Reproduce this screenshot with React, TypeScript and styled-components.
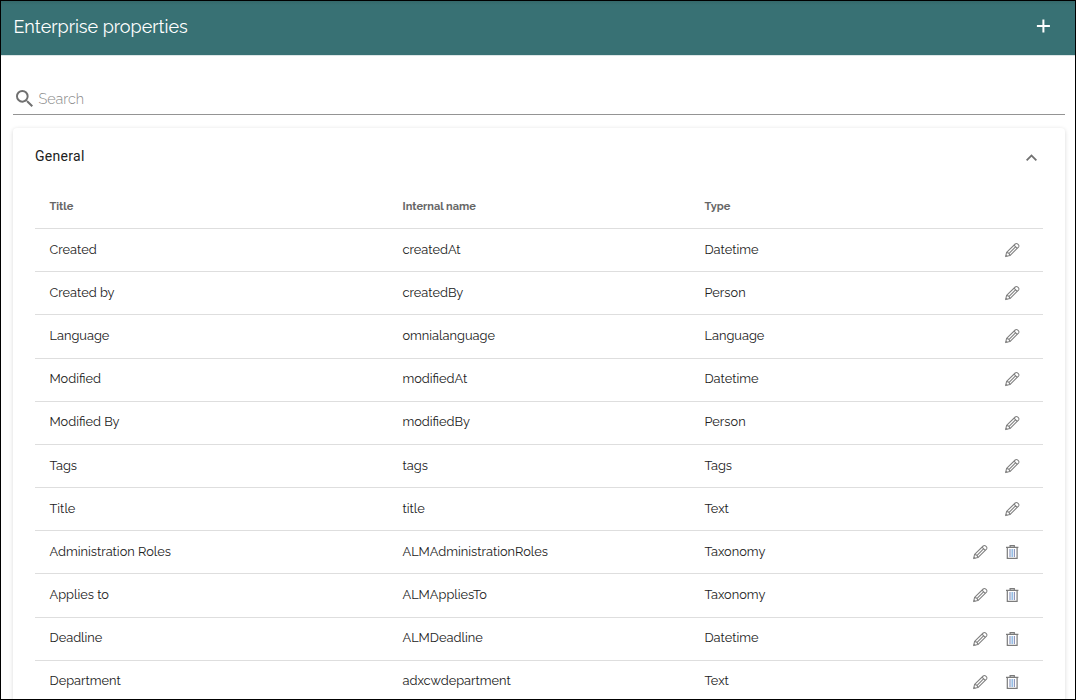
import React from "react";
import styled, { createGlobalStyle } from "styled-components";

const GlobalStyle = createGlobalStyle`
  * { box-sizing: border-box; }
  body { margin: 0; background: #fff; }
`;

const Frame = styled.div`
  height: 700px;
  border: 1px solid #000;
  overflow: hidden;
  background: #fff;
  color: #212121;
  font-family: Raleway, Lato, sans-serif;
  font-size: 12.8px;
`;

const Header = styled.header`
  display: flex;
  align-items: center;
  justify-content: space-between;
  height: 54px;
  padding: 0 25px 3px 12.5px;
  color: #fff;
  background: linear-gradient(#34686a, #387174 4px);
  box-shadow: 0 1px 0 #dce6e7;
`;

const Heading = styled.h1`
  margin: 0;
  font-size: 18px;
  font-weight: 400;
  line-height: 24px;
`;

const SearchBar = styled.div`
  display: flex;
  align-items: center;
  height: 33px;
  margin: 27px 10px 0 12px;
  padding: 1px 0 0 3px;
  gap: 5.5px;
  border-bottom: 1px solid #949494;
`;

const SearchText = styled.span`
  color: #8a8a8a;
  font-size: 14.4px;
  font-weight: 300;
`;

const Card = styled.section`
  height: 640px;
  margin: 13px 10px 0 12px;
  padding: 0 22px;
  border-radius: 4px;
  box-shadow: 0 1px 4px rgba(0, 0, 0, 0.16);
`;

const CardHeader = styled.div`
  display: flex;
  align-items: center;
  justify-content: space-between;
  height: 57px;
  padding-right: 6px;
`;

const CardTitle = styled.h2`
  margin: 0;
  padding-bottom: 2px;
  color: #212121;
  font: 400 14px/20px Roboto, sans-serif;
  letter-spacing: 0.3px;
`;

const Row = styled.div`
  display: grid;
  grid-template-columns: 353px 302px 1fr auto;
  align-items: center;
  height: 43.18px;
  padding: 0 23px 0 14.5px;
  border-bottom: 1px solid #dedede;
`;

const HeadRow = styled(Row)`
  height: 44px;
  color: #666;
  font-size: 11px;
  font-weight: 700;
`;

const HeadCell = styled.span`
  white-space: nowrap;
`;

const Cell = styled(HeadCell)`
  padding-bottom: 1.83px;
`;

const Actions = styled.div`
  display: flex;
  gap: 16px;
  padding-bottom: 0.25px;
`;

const Icon = styled.svg`
  display: block;
  flex: none;
`;

const PlusIcon = () => (
  <Icon width="14" height="16" viewBox="0 0 14 16" stroke="#fff" strokeWidth="2">
    <path d="M7.4 .5v13M.9 7h13" />
  </Icon>
);

const SearchIcon = () => (
  <Icon width="17" height="17" viewBox="3 3 17.49 17.49" fill="#707070">
    <path d="M15.5 14h-.79l-.28-.27A6.471 6.471 0 0 0 16 9.5 6.5 6.5 0 1 0 9.5 16c1.61 0 3.09-.59 4.23-1.57l.27.28v.79l5 4.99L20.49 19l-4.99-5zm-6 0C7.01 14 5 11.99 5 9.5S7.01 5 9.5 5 14 7.01 14 9.5 11.99 14 9.5 14z" />
  </Icon>
);

const ChevronIcon = () => (
  <Icon width="11" height="9" viewBox="6 5.6 12 9.82" fill="#707070">
    <path d="M12 8l-6 6 1.41 1.41L12 10.83l4.59 4.58L18 14z" />
  </Icon>
);

const PencilIcon = () => (
  <Icon width="16" height="16" viewBox="-0.4 0 16 16" fill="none" stroke="#808080" strokeWidth="1.05" strokeLinejoin="round">
    <path d="M1.2 14.6l1-4.2 8.6-8.4c1.7-1.6 4.9 1.4 3.3 3.1l-8.6 8.5-4.3 1z" />
    <path d="M2.2 10.4c1.8.1 3.2 1.4 3.3 3.2M9.6 3.2l3.2 3.2M4.2 11.8l6.9-6.9M1.5 13.1l1.4 1.4" />
  </Icon>
);

const TrashIcon = () => (
  <Icon width="16" height="16" viewBox="0 0 16 16" fill="none" stroke="#7b7b7b" strokeWidth="1.2">
    <path d="M2 3.4h12.4M6.1 3V1.7h4.2V3" />
    <path d="M3.3 3.5v10.9h9.8V3.5" />
    <path d="M6 5v8M10.4 5v8" stroke="#9098bd" />
    <path d="M8.2 5v8" stroke="#90bce4" strokeWidth="1.5" />
  </Icon>
);

type Property = { title: string; name: string; type: string; removable?: boolean };

const properties: Property[] = [
  { title: "Created", name: "createdAt", type: "Datetime" },
  { title: "Created by", name: "createdBy", type: "Person" },
  { title: "Language", name: "omnialanguage", type: "Language" },
  { title: "Modified", name: "modifiedAt", type: "Datetime" },
  { title: "Modified By", name: "modifiedBy", type: "Person" },
  { title: "Tags", name: "tags", type: "Tags" },
  { title: "Title", name: "title", type: "Text" },
  { title: "Administration Roles", name: "ALMAdministrationRoles", type: "Taxonomy", removable: true },
  { title: "Applies to", name: "ALMAppliesTo", type: "Taxonomy", removable: true },
  { title: "Deadline", name: "ALMDeadline", type: "Datetime", removable: true },
  { title: "Department", name: "adxcwdepartment", type: "Text", removable: true },
];

export default function App() {
  return (
    <Frame>
      <GlobalStyle />
      <Header>
        <Heading>Enterprise properties</Heading>
        <PlusIcon />
      </Header>
      <SearchBar>
        <SearchIcon />
        <SearchText>Search</SearchText>
      </SearchBar>
      <Card>
        <CardHeader>
          <CardTitle>General</CardTitle>
          <ChevronIcon />
        </CardHeader>
        <HeadRow>
          <HeadCell>Title</HeadCell>
          <HeadCell>Internal name</HeadCell>
          <HeadCell>Type</HeadCell>
        </HeadRow>
        {properties.map((p) => (
          <Row key={p.name}>
            <Cell>{p.title}</Cell>
            <Cell>{p.name}</Cell>
            <Cell>{p.type}</Cell>
            <Actions>
              <PencilIcon />
              {p.removable && <TrashIcon />}
            </Actions>
          </Row>
        ))}
      </Card>
    </Frame>
  );
}
